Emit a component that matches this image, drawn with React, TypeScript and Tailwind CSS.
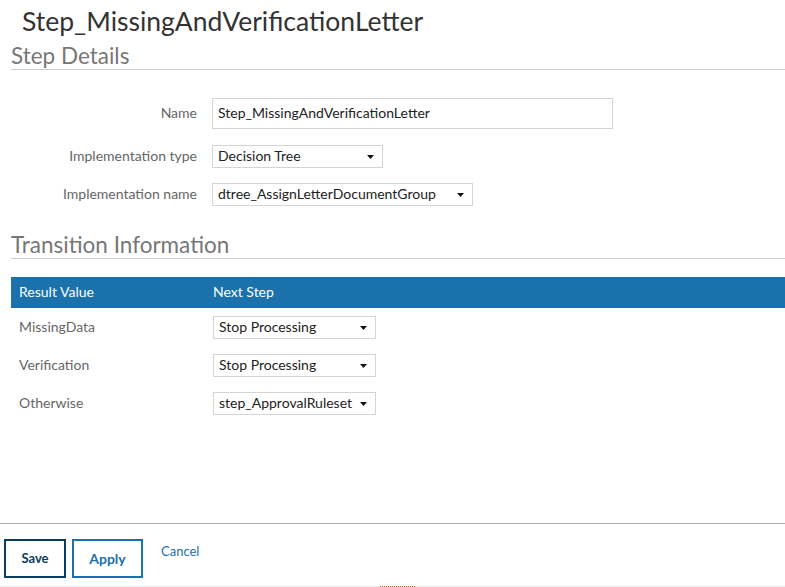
import React from 'react';

const Caret = () => (
  <svg width="7" height="4" viewBox="0 0 7 4" className="shrink-0">
    <path d="M0 0 L7 0 L3.5 4 Z" fill="#111" />
  </svg>
);

function FakeSelect({ value, width }: { value: string; width: string }) {
  return (
    <div className={`${width} h-[23px] border border-[#d4d4d4] bg-white flex items-center justify-between pl-[5px] pr-[8px] text-[14px] text-[#222]`}>
      <span className="whitespace-nowrap pb-[2px]">{value}</span>
      <Caret />
    </div>
  );
}

const transitions = [
  { result: 'MissingData', next: 'Stop Processing' },
  { result: 'Verification', next: 'Stop Processing' },
  { result: 'Otherwise', next: 'step_ApprovalRuleset' },
];

export default function App() {
  return (
    <div className="w-[785px] h-[587px] bg-white flex flex-col font-['Lato','Open_Sans',sans-serif] overflow-hidden">
      <h1 className="pl-[22px] pt-[4px] h-[44px] text-[26.5px] leading-[34px] text-[#333]">Step_MissingAndVerificationLetter</h1>

      <div className="ml-[11px] border-b border-[#cfcfcf] text-[22.5px] leading-[24px] text-[#777] pb-[1px]">Step Details</div>

      <div className="flex flex-col mt-[28px] text-[14px]">
        <div className="flex items-center">
          <div className="w-[197px] text-right text-[#666] pb-[2px]">Name</div>
          <div className="ml-[15px] w-[401px] h-[31px] border border-[#d4d4d4] flex items-center pl-[5px] pb-[2px] text-[#222]">Step_MissingAndVerificationLetter</div>
        </div>
        <div className="flex items-center mt-[16px]">
          <div className="w-[197px] text-right text-[#666] pb-[2px]">Implementation type</div>
          <div className="ml-[15px]"><FakeSelect value="Decision Tree" width="w-[171px]" /></div>
        </div>
        <div className="flex items-center mt-[15px]">
          <div className="w-[197px] text-right text-[#666] pb-[2px]">Implementation name</div>
          <div className="ml-[15px]"><FakeSelect value="dtree_AssignLetterDocumentGroup" width="w-[261px]" /></div>
        </div>
      </div>

      <div className="ml-[11px] mt-[27px] border-b border-[#cfcfcf] text-[22.5px] leading-[24px] text-[#777] pb-[1px]">Transition Information</div>

      <div className="ml-[11px] mt-[18px] text-[14px]">
        <div className="h-[31px] bg-[#1a71ab] flex items-center text-white">
          <div className="w-[202px] pl-[8px] pb-[2px]">Result Value</div>
          <div className="pb-[2px]">Next Step</div>
        </div>
        <div className="flex flex-col gap-[15px] mt-[8px]">
          {transitions.map((t) => (
            <div key={t.result} className="flex items-center">
              <div className="w-[202px] pl-[8px] pb-[2px] text-[#666]">{t.result}</div>
              <FakeSelect value={t.next} width="w-[163px]" />
            </div>
          ))}
        </div>
      </div>

      <div className="flex-1" />

      <div className="border-t border-[#ababab] h-[64px] flex items-start pt-[15px] pl-[4px] gap-[6px] relative">
        <button className="w-[62px] h-[39px] border-2 border-[#0b3d5f] text-[13px] font-bold text-[#0b3d5f]">Save</button>
        <button className="w-[71px] h-[39px] border-2 border-[#1a71ab] text-[14px] font-bold text-[#1a71ab]">Apply</button>
        <span className="ml-[12px] mt-[3px] text-[13px] text-[#1a71ab]">Cancel</span>
        <div className="absolute left-0 right-0 bottom-0 h-[1px] bg-[#ececec]" />
        <div className="absolute left-[380px] bottom-0 w-[35px] h-[1px] border-b border-dotted border-[#b0601a]" />
      </div>
    </div>
  );
}
